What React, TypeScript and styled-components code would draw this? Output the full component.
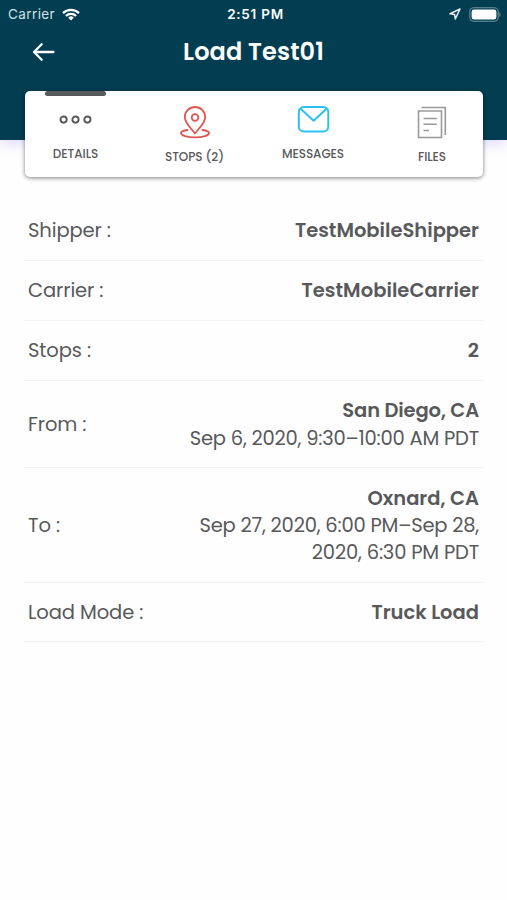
import React from "react";
import styled, { createGlobalStyle } from "styled-components";

const GlobalStyle = createGlobalStyle`
  * { box-sizing: border-box; }
  body {
    margin: 0;
    background: #fefefe;
    font-family: Poppins, Inter, "Open Sans", sans-serif;
    color: #58595b;
  }
`;

const Screen = styled.div`
  width: 507px;
  height: 900px;
  overflow: hidden;
  background: #fefefe;
`;

const Header = styled.header`
  height: 140px;
  background: #023d52;
  color: #fff;
  box-shadow: 0 2px 14px rgba(120, 110, 255, 0.3);
`;

const StatusBar = styled.div`
  height: 28px;
  display: grid;
  grid-template-columns: 1fr auto 1fr;
  align-items: center;
  padding: 0 6px 0 8px;
  font-family: Inter, Roboto, sans-serif;
  font-size: 13.5px;
`;

const Carrier = styled.div`
  display: flex;
  align-items: center;
  gap: 7px;
  color: #d3e0e5;
  letter-spacing: 0.4px;
`;

const Clock = styled.div`
  font-size: 13.5px;
  font-weight: 600;
  letter-spacing: 0.75px;
  padding-left: 2px;
`;

const Indicators = styled.div`
  display: flex;
  align-items: center;
  justify-content: flex-end;
  gap: 8px;
`;

const NavBar = styled.div`
  height: 46px;
  display: grid;
  grid-template-columns: 56px 1fr 56px;
  align-items: center;
  padding: 0;
`;

const BackButton = styled.button`
  border: 0;
  padding: 2px 0 0 32px;
  background: none;
  display: flex;
`;

const Title = styled.h1`
  margin: 0;
  text-align: center;
  font-size: 24px;
  font-weight: 600;
  letter-spacing: 0.1px;
`;

const TabCard = styled.nav`
  position: relative;
  width: 458px;
  height: 86px;
  margin: -49px 0 0 25px;
  display: grid;
  grid-template-columns: 101px 137px 100px 138px;
  background: #fff;
  border-radius: 5px;
  box-shadow: 0 1px 4px rgba(0, 0, 0, 0.5);
`;

const Tab = styled.div<{ $lower?: boolean }>`
  display: grid;
  grid-template-rows: 56px 1fr;
  padding-top: ${(p) => (p.$lower ? 3 : 0)}px;
  justify-items: center;
  align-items: center;
  position: relative;
`;

const ActiveBar = styled.span`
  position: absolute;
  top: 0;
  left: 20px;
  width: 61px;
  height: 5px;
  border-radius: 3px;
  background: #58595b;
`;

const TabLabel = styled.span`
  align-self: start;
  font-size: 12px;
  line-height: 14px;
  font-weight: 500;
  white-space: nowrap;
  letter-spacing: -0.06px;
`;

const DetailList = styled.dl`
  margin: 24px 24px 0;
`;

const Row = styled.div<{ $height: number }>`
  height: ${(p) => p.$height}px;
  display: flex;
  align-items: center;
  justify-content: space-between;
  padding: 1px 4px 0 4px;
  border-bottom: 1px solid #f3f3f3;
  font-size: 19.5px;
  line-height: 27.3px;
`;

const Term = styled.dt`
  white-space: nowrap;
  letter-spacing: -0.1px;
`;

const Value = styled.dd`
  margin: 0;
  display: grid;
  justify-items: end;
`;

const Line = styled.span<{ $track?: number; $strong?: boolean }>`
  white-space: nowrap;
  font-weight: ${(p) => (p.$strong ? 600 : 400)};
  letter-spacing: ${(p) => p.$track ?? 0}px;
`;

type TextLine = { text: string; track?: number; strong?: boolean };
const rows: { term: string; height: number; lines: TextLine[] }[] = [
  { term: "Shipper :", height: 60, lines: [{ text: "TestMobileShipper", strong: true }] },
  { term: "Carrier :", height: 60, lines: [{ text: "TestMobileCarrier", track: 0.04, strong: true }] },
  { term: "Stops :", height: 60, lines: [{ text: "2", strong: true }] },
  {
    term: "From :", height: 87.3, lines: [
      { text: "San Diego, CA", track: -0.12, strong: true },
      { text: "Sep 6, 2020, 9:30–10:00 AM PDT", track: -0.22 },
    ],
  },
  {
    term: "To :", height: 114.6, lines: [
      { text: "Oxnard, CA", strong: true },
      { text: "Sep 27, 2020, 6:00 PM–Sep 28,", track: -0.21 },
      { text: "2020, 6:30 PM PDT", track: -0.19 },
    ],
  },
  { term: "Load Mode :", height: 59.6, lines: [{ text: "Truck Load", strong: true }] },
];

const WifiIcon = () => (
  <svg width="18" height="13" viewBox="0 0 18 13" fill="none" stroke="#fff" strokeWidth="2.2">
    <path d="M1 5.1a11.3 11.3 0 0 1 16 0" />
    <path d="M3.9 8a7.2 7.2 0 0 1 10.2 0" />
    <path d="M9 12.5 6.2 9.7a4 4 0 0 1 5.6 0Z" fill="#fff" stroke="none" />
  </svg>
);

const LocationIcon = () => (
  <svg width="12" height="12" viewBox="0 0 12 12" fill="none" stroke="#e4eef1" strokeWidth="1.5" strokeLinejoin="round">
    <path d="M11 1 1 5.7l4.6.7.7 4.5Z" />
  </svg>
);

const BatteryIcon = () => (
  <svg width="32" height="15" viewBox="0 0 32 15">
    <rect x="0.8" y="0.8" width="28.4" height="13.4" rx="4" fill="none" stroke="#6f909c" strokeWidth="1.1" />
    <rect x="2.6" y="2.6" width="24.8" height="9.8" rx="2.3" fill="#fff" />
    <path d="M30.3 5v5c1.5-.8 1.5-4.2 0-5Z" fill="#6f909c" />
  </svg>
);

const BackIcon = () => (
  <svg width="24" height="20" viewBox="0 0 24 20" fill="none" stroke="#fff" strokeWidth="2.3" strokeLinecap="round" strokeLinejoin="round">
    <path d="M21.5 10H2M9.7 2.2 2 10l7.7 7.8" />
  </svg>
);

const DotsIcon = () => (
  <svg width="33" height="10" viewBox="0 0 33 10" fill="none" stroke="#58595b" strokeWidth="1.9">
    <circle cx="4.6" cy="5.6" r="3.1" />
    <circle cx="16.5" cy="5.6" r="3.1" />
    <circle cx="28.4" cy="5.6" r="3.1" />
  </svg>
);

const PinIcon = () => (
  <svg width="32" height="33" viewBox="0 0 32 33" fill="none" stroke="#dc5850" strokeWidth="1.8" strokeLinecap="round" strokeLinejoin="round">
    <path d="M16 27.5C12.3 22.5 5.8 17 5.8 11.2a10.2 10.2 0 0 1 20.4 0C26.2 17 19.7 22.5 16 27.5Z" />
    <circle cx="16" cy="11.5" r="3.3" />
    <path d="M8.5 24C4.3 24.5 2 25.8 2 27.1c0 2.4 6 4.3 14 4.3s14-1.9 14-4.3c0-1.3-2.3-2.6-6.5-3.1" />
  </svg>
);

const MailIcon = () => (
  <svg width="33" height="27" viewBox="0 0 33 27" fill="none" stroke="#2cc0f2" strokeWidth="2" strokeLinejoin="round">
    <rect x="1.8" y="1" width="29.5" height="24.5" rx="5" />
    <path d="m3.3 2.5 13.3 12.3L29.8 2.5" />
  </svg>
);

const FilesIcon = () => (
  <svg width="30" height="33" viewBox="0 0 30 33" fill="none" stroke="#999" strokeWidth="1.6">
    <path d="M1.5 5H24.5v26.5H1.5ZM4.5 1.5h23.8V29M6.5 12.5H19.8M6.5 18.2H19.8M6.5 24.5h5.5" />
  </svg>
);

export default function App() {
  return (
    <Screen>
      <GlobalStyle />
      <Header>
        <StatusBar>
          <Carrier>Carrier <WifiIcon /></Carrier>
          <Clock>2:51 PM</Clock>
          <Indicators><LocationIcon /><BatteryIcon /></Indicators>
        </StatusBar>
        <NavBar>
          <BackButton aria-label="Back"><BackIcon /></BackButton>
          <Title>Load Test01</Title>
        </NavBar>
      </Header>
      <TabCard>
        <Tab><ActiveBar /><DotsIcon /><TabLabel>DETAILS</TabLabel></Tab>
        <Tab $lower><PinIcon /><TabLabel>STOPS (2)</TabLabel></Tab>
        <Tab><MailIcon /><TabLabel>MESSAGES</TabLabel></Tab>
        <Tab $lower><FilesIcon /><TabLabel>FILES</TabLabel></Tab>
      </TabCard>
      <DetailList>
        {rows.map((row) => (
          <Row key={row.term} $height={row.height}>
            <Term>{row.term}</Term>
            <Value>
              {row.lines.map((line) => (
                <Line key={line.text} $track={line.track} $strong={line.strong}>{line.text}</Line>
              ))}
            </Value>
          </Row>
        ))}
      </DetailList>
    </Screen>
  );
}
